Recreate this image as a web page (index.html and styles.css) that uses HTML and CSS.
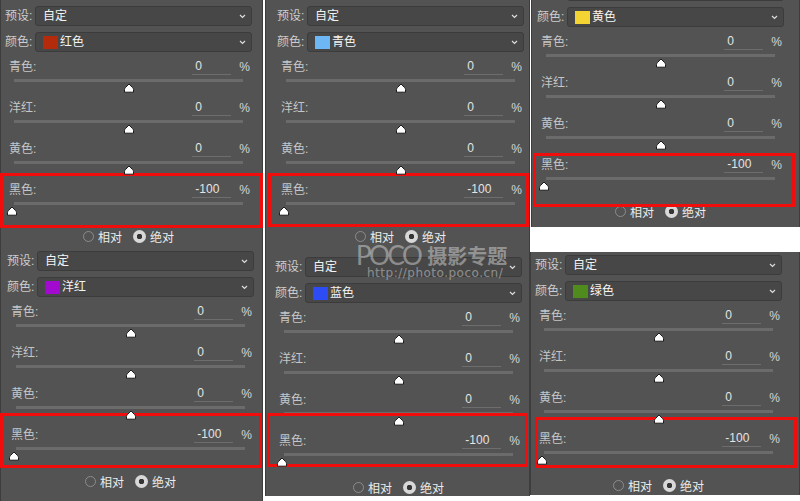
FILE: index.html
```html
<!DOCTYPE html>
<html lang="zh-CN">
<head>
    <meta charset="UTF-8">
    <meta name="viewport" content="width=device-width, initial-scale=1.0">
    <title>可选颜色 · 黑色 -100</title>
    <link rel="stylesheet" href="styles.css">
</head>
<body>
<div class="board">

    <!-- 红色 -->
    <section class="panel p1">
        <div class="field"><span class="lbl">预设:</span><div class="select"><span class="txt">自定</span><svg class="chev" width="7" height="5" viewBox="0 0 7 5"><polyline points="1,1 3.5,3.5 6,1"/></svg></div></div>
        <div class="field"><span class="lbl">颜色:</span><div class="select"><i class="swatch red"></i><span class="txt">红色</span><svg class="chev" width="7" height="5" viewBox="0 0 7 5"><polyline points="1,1 3.5,3.5 6,1"/></svg></div></div>
        <div class="adj"><div class="head"><span class="name">青色:</span><span class="val">0</span><span class="pct">%</span></div><div class="track"><svg class="thumb mid" width="12" height="10" viewBox="0 0 12 10"><path d="M1.5 9.2V6.6Q1.5 5.5 2.5 4.5L6 1l3.5 3.5q1 1 1 2.1v2.6z"/></svg></div></div>
        <div class="adj"><div class="head"><span class="name">洋红:</span><span class="val">0</span><span class="pct">%</span></div><div class="track"><svg class="thumb mid" width="12" height="10" viewBox="0 0 12 10"><path d="M1.5 9.2V6.6Q1.5 5.5 2.5 4.5L6 1l3.5 3.5q1 1 1 2.1v2.6z"/></svg></div></div>
        <div class="adj"><div class="head"><span class="name">黄色:</span><span class="val">0</span><span class="pct">%</span></div><div class="track"><svg class="thumb mid" width="12" height="10" viewBox="0 0 12 10"><path d="M1.5 9.2V6.6Q1.5 5.5 2.5 4.5L6 1l3.5 3.5q1 1 1 2.1v2.6z"/></svg></div></div>
        <div class="adj"><div class="head"><span class="name">黑色:</span><span class="val">-100</span><span class="pct">%</span></div><div class="track"><svg class="thumb min" width="12" height="10" viewBox="0 0 12 10"><path d="M1.5 9.2V6.6Q1.5 5.5 2.5 4.5L6 1l3.5 3.5q1 1 1 2.1v2.6z"/></svg></div></div>
        <div class="mode"><label class="opt"><span class="radio"></span>相对</label><label class="opt"><span class="radio on"></span>绝对</label></div>
        <div class="mark"></div>
    </section>

    <!-- 青色 -->
    <section class="panel p2">
        <div class="field"><span class="lbl">预设:</span><div class="select"><span class="txt">自定</span><svg class="chev" width="7" height="5" viewBox="0 0 7 5"><polyline points="1,1 3.5,3.5 6,1"/></svg></div></div>
        <div class="field"><span class="lbl">颜色:</span><div class="select"><i class="swatch cyan"></i><span class="txt">青色</span><svg class="chev" width="7" height="5" viewBox="0 0 7 5"><polyline points="1,1 3.5,3.5 6,1"/></svg></div></div>
        <div class="adj"><div class="head"><span class="name">青色:</span><span class="val">0</span><span class="pct">%</span></div><div class="track"><svg class="thumb mid" width="12" height="10" viewBox="0 0 12 10"><path d="M1.5 9.2V6.6Q1.5 5.5 2.5 4.5L6 1l3.5 3.5q1 1 1 2.1v2.6z"/></svg></div></div>
        <div class="adj"><div class="head"><span class="name">洋红:</span><span class="val">0</span><span class="pct">%</span></div><div class="track"><svg class="thumb mid" width="12" height="10" viewBox="0 0 12 10"><path d="M1.5 9.2V6.6Q1.5 5.5 2.5 4.5L6 1l3.5 3.5q1 1 1 2.1v2.6z"/></svg></div></div>
        <div class="adj"><div class="head"><span class="name">黄色:</span><span class="val">0</span><span class="pct">%</span></div><div class="track"><svg class="thumb mid" width="12" height="10" viewBox="0 0 12 10"><path d="M1.5 9.2V6.6Q1.5 5.5 2.5 4.5L6 1l3.5 3.5q1 1 1 2.1v2.6z"/></svg></div></div>
        <div class="adj"><div class="head"><span class="name">黑色:</span><span class="val">-100</span><span class="pct">%</span></div><div class="track"><svg class="thumb min" width="12" height="10" viewBox="0 0 12 10"><path d="M1.5 9.2V6.6Q1.5 5.5 2.5 4.5L6 1l3.5 3.5q1 1 1 2.1v2.6z"/></svg></div></div>
        <div class="mode"><label class="opt"><span class="radio"></span>相对</label><label class="opt"><span class="radio on"></span>绝对</label></div>
        <div class="mark"></div>
    </section>

    <!-- 黄色 (preset row is cropped away at the top edge) -->
    <section class="panel p3">
        <div class="field"><span class="lbl"></span><div class="select"></div></div>
        <div class="field"><span class="lbl">颜色:</span><div class="select"><i class="swatch yellow"></i><span class="txt">黄色</span><svg class="chev" width="7" height="5" viewBox="0 0 7 5"><polyline points="1,1 3.5,3.5 6,1"/></svg></div></div>
        <div class="adj"><div class="head"><span class="name">青色:</span><span class="val">0</span><span class="pct">%</span></div><div class="track"><svg class="thumb mid" width="12" height="10" viewBox="0 0 12 10"><path d="M1.5 9.2V6.6Q1.5 5.5 2.5 4.5L6 1l3.5 3.5q1 1 1 2.1v2.6z"/></svg></div></div>
        <div class="adj"><div class="head"><span class="name">洋红:</span><span class="val">0</span><span class="pct">%</span></div><div class="track"><svg class="thumb mid" width="12" height="10" viewBox="0 0 12 10"><path d="M1.5 9.2V6.6Q1.5 5.5 2.5 4.5L6 1l3.5 3.5q1 1 1 2.1v2.6z"/></svg></div></div>
        <div class="adj"><div class="head"><span class="name">黄色:</span><span class="val">0</span><span class="pct">%</span></div><div class="track"><svg class="thumb mid" width="12" height="10" viewBox="0 0 12 10"><path d="M1.5 9.2V6.6Q1.5 5.5 2.5 4.5L6 1l3.5 3.5q1 1 1 2.1v2.6z"/></svg></div></div>
        <div class="adj"><div class="head"><span class="name">黑色:</span><span class="val">-100</span><span class="pct">%</span></div><div class="track"><svg class="thumb min" width="12" height="10" viewBox="0 0 12 10"><path d="M1.5 9.2V6.6Q1.5 5.5 2.5 4.5L6 1l3.5 3.5q1 1 1 2.1v2.6z"/></svg></div></div>
        <div class="mode"><label class="opt"><span class="radio"></span>相对</label><label class="opt"><span class="radio on"></span>绝对</label></div>
        <div class="mark"></div>
    </section>

    <!-- 洋红 -->
    <section class="panel p4">
        <div class="field"><span class="lbl">预设:</span><div class="select"><span class="txt">自定</span><svg class="chev" width="7" height="5" viewBox="0 0 7 5"><polyline points="1,1 3.5,3.5 6,1"/></svg></div></div>
        <div class="field"><span class="lbl">颜色:</span><div class="select"><i class="swatch magenta"></i><span class="txt">洋红</span><svg class="chev" width="7" height="5" viewBox="0 0 7 5"><polyline points="1,1 3.5,3.5 6,1"/></svg></div></div>
        <div class="adj"><div class="head"><span class="name">青色:</span><span class="val">0</span><span class="pct">%</span></div><div class="track"><svg class="thumb mid" width="12" height="10" viewBox="0 0 12 10"><path d="M1.5 9.2V6.6Q1.5 5.5 2.5 4.5L6 1l3.5 3.5q1 1 1 2.1v2.6z"/></svg></div></div>
        <div class="adj"><div class="head"><span class="name">洋红:</span><span class="val">0</span><span class="pct">%</span></div><div class="track"><svg class="thumb mid" width="12" height="10" viewBox="0 0 12 10"><path d="M1.5 9.2V6.6Q1.5 5.5 2.5 4.5L6 1l3.5 3.5q1 1 1 2.1v2.6z"/></svg></div></div>
        <div class="adj"><div class="head"><span class="name">黄色:</span><span class="val">0</span><span class="pct">%</span></div><div class="track"><svg class="thumb mid" width="12" height="10" viewBox="0 0 12 10"><path d="M1.5 9.2V6.6Q1.5 5.5 2.5 4.5L6 1l3.5 3.5q1 1 1 2.1v2.6z"/></svg></div></div>
        <div class="adj"><div class="head"><span class="name">黑色:</span><span class="val">-100</span><span class="pct">%</span></div><div class="track"><svg class="thumb min" width="12" height="10" viewBox="0 0 12 10"><path d="M1.5 9.2V6.6Q1.5 5.5 2.5 4.5L6 1l3.5 3.5q1 1 1 2.1v2.6z"/></svg></div></div>
        <div class="mode"><label class="opt"><span class="radio"></span>相对</label><label class="opt"><span class="radio on"></span>绝对</label></div>
        <div class="mark"></div>
    </section>

    <!-- 蓝色 -->
    <section class="panel p5">
        <div class="field"><span class="lbl">预设:</span><div class="select"><span class="txt">自定</span><svg class="chev" width="7" height="5" viewBox="0 0 7 5"><polyline points="1,1 3.5,3.5 6,1"/></svg></div></div>
        <div class="field"><span class="lbl">颜色:</span><div class="select"><i class="swatch blue"></i><span class="txt">蓝色</span><svg class="chev" width="7" height="5" viewBox="0 0 7 5"><polyline points="1,1 3.5,3.5 6,1"/></svg></div></div>
        <div class="adj"><div class="head"><span class="name">青色:</span><span class="val">0</span><span class="pct">%</span></div><div class="track"><svg class="thumb mid" width="12" height="10" viewBox="0 0 12 10"><path d="M1.5 9.2V6.6Q1.5 5.5 2.5 4.5L6 1l3.5 3.5q1 1 1 2.1v2.6z"/></svg></div></div>
        <div class="adj"><div class="head"><span class="name">洋红:</span><span class="val">0</span><span class="pct">%</span></div><div class="track"><svg class="thumb mid" width="12" height="10" viewBox="0 0 12 10"><path d="M1.5 9.2V6.6Q1.5 5.5 2.5 4.5L6 1l3.5 3.5q1 1 1 2.1v2.6z"/></svg></div></div>
        <div class="adj"><div class="head"><span class="name">黄色:</span><span class="val">0</span><span class="pct">%</span></div><div class="track"><svg class="thumb mid" width="12" height="10" viewBox="0 0 12 10"><path d="M1.5 9.2V6.6Q1.5 5.5 2.5 4.5L6 1l3.5 3.5q1 1 1 2.1v2.6z"/></svg></div></div>
        <div class="adj"><div class="head"><span class="name">黑色:</span><span class="val">-100</span><span class="pct">%</span></div><div class="track"><svg class="thumb min" width="12" height="10" viewBox="0 0 12 10"><path d="M1.5 9.2V6.6Q1.5 5.5 2.5 4.5L6 1l3.5 3.5q1 1 1 2.1v2.6z"/></svg></div></div>
        <div class="mode"><label class="opt"><span class="radio"></span>相对</label><label class="opt"><span class="radio on"></span>绝对</label></div>
        <div class="mark"></div>
    </section>

    <!-- 绿色 -->
    <section class="panel p6">
        <div class="field"><span class="lbl">预设:</span><div class="select"><span class="txt">自定</span><svg class="chev" width="7" height="5" viewBox="0 0 7 5"><polyline points="1,1 3.5,3.5 6,1"/></svg></div></div>
        <div class="field"><span class="lbl">颜色:</span><div class="select"><i class="swatch green"></i><span class="txt">绿色</span><svg class="chev" width="7" height="5" viewBox="0 0 7 5"><polyline points="1,1 3.5,3.5 6,1"/></svg></div></div>
        <div class="adj"><div class="head"><span class="name">青色:</span><span class="val">0</span><span class="pct">%</span></div><div class="track"><svg class="thumb mid" width="12" height="10" viewBox="0 0 12 10"><path d="M1.5 9.2V6.6Q1.5 5.5 2.5 4.5L6 1l3.5 3.5q1 1 1 2.1v2.6z"/></svg></div></div>
        <div class="adj"><div class="head"><span class="name">洋红:</span><span class="val">0</span><span class="pct">%</span></div><div class="track"><svg class="thumb mid" width="12" height="10" viewBox="0 0 12 10"><path d="M1.5 9.2V6.6Q1.5 5.5 2.5 4.5L6 1l3.5 3.5q1 1 1 2.1v2.6z"/></svg></div></div>
        <div class="adj"><div class="head"><span class="name">黄色:</span><span class="val">0</span><span class="pct">%</span></div><div class="track"><svg class="thumb mid" width="12" height="10" viewBox="0 0 12 10"><path d="M1.5 9.2V6.6Q1.5 5.5 2.5 4.5L6 1l3.5 3.5q1 1 1 2.1v2.6z"/></svg></div></div>
        <div class="adj"><div class="head"><span class="name">黑色:</span><span class="val">-100</span><span class="pct">%</span></div><div class="track"><svg class="thumb min" width="12" height="10" viewBox="0 0 12 10"><path d="M1.5 9.2V6.6Q1.5 5.5 2.5 4.5L6 1l3.5 3.5q1 1 1 2.1v2.6z"/></svg></div></div>
        <div class="mode"><label class="opt"><span class="radio"></span>相对</label><label class="opt"><span class="radio on"></span>绝对</label></div>
        <div class="mark"></div>
    </section>

    <div class="watermark">
        <div class="wm-title"><span class="wm-poco">POCO</span><span class="wm-cn">摄影专题</span></div>
        <div class="wm-url">http://photo.poco.cn/</div>
    </div>
</div>
</body>
</html>
```

FILE: styles.css
```css
body {
    margin: 0;
    background-color: white;
    font-family: "Liberation Sans", "Noto Sans CJK SC", sans-serif;
    overflow: hidden;
}

.board {
    position: relative;
    width: 800px;
    height: 501px;
    overflow: hidden;
    background-color: white;
}

/* each screenshot sits on the board like a pasted window */
.panel {
    position: absolute;
    box-sizing: border-box;
    background-color: #535353;
    color: #c6c6c6;
    font-size: 12px;
    box-shadow: inset 1px 0 0 #3d3d3d, inset -1px 0 0 #3d3d3d;
}

.p1 { left: 0;     top: -20px; width: 263px; height: 266px; padding: 26px 0 0 0; }
.p2 { left: 265px; top: -20px; width: 265px; height: 267px; padding: 26px 0 0 7px; }
.p3 { left: 531px; top: -45px; width: 269px; height: 272px; padding: 26px 0 0 1px; }
.p4 { left: 0;     top: 246px; width: 263px; height: 260px; padding: 5px 0 0 2px; }
.p5 { left: 265px; top: 247px; width: 265px; height: 249px; padding: 10px 0 0 5px; }
.p6 { left: 530px; top: 252px; width: 270px; height: 243px; padding: 3px 0 0 0; }

.field {
    display: flex;
    align-items: center;
    height: 20px;
    line-height: 14px;
}

.field + .field {
    margin-top: 6px;
}

.lbl {
    width: 35px;
    padding-left: 5px;
    box-sizing: border-box;
    color: #cdcdcd;
    white-space: nowrap;
}

.select {
    display: flex;
    align-items: center;
    width: 217px;
    height: 20px;
    box-sizing: border-box;
    padding: 0 5px 0 7px;
    background-color: #474747;
    border: 1px solid #3c3c3c;
    border-radius: 3px;
    color: #f4f4f4;
}

.select .txt {
    flex: 1;
}

.chev {
    fill: none;
    stroke: #dcdcdc;
    stroke-width: 1.2;
}

.swatch {
    width: 15px;
    height: 13px;
    margin-right: 2px;
}

.red { background-color: #b32b0b; }
.cyan { background-color: #6db7f4; }
.yellow { background-color: #f4d433; }
.magenta { background-color: #a20bcf; }
.blue { background-color: #2e4cf6; }
.green { background-color: #4f8b1d; }

.adj {
    height: 41px;
    box-sizing: border-box;
    padding-top: 7px;
}

.head {
    display: flex;
    width: 241px;
    height: 16px;
    margin-left: 9px;
    line-height: 16px;
}

.name {
    flex: 1;
}

.val {
    width: 39px;
    box-sizing: border-box;
    padding-left: 3px;
    border-bottom: 1px solid #6d6d6d;
    color: #e4e4e4;
    line-height: 15px;
}

.pct {
    margin-left: 8px;
    color: #d6d6d6;
}

.track {
    position: relative;
    width: 229px;
    height: 3px;
    margin: 4px 0 0 14px;
    background-color: #6b6b6b;
}

.thumb {
    position: absolute;
    top: 4px;
    z-index: 1;
}

.thumb path {
    fill: white;
    stroke: #1c1c1c;
    stroke-width: 1;
    stroke-linejoin: round;
}

.thumb.mid { left: calc(50% - 6px); }
.thumb.min { left: -8px; }

.mode {
    display: flex;
    justify-content: center;
    align-items: center;
    width: 257px;
    height: 20px;
    padding-top: 10px;
    color: #ececec;
}

.opt {
    display: flex;
    align-items: center;
    gap: 4px;
}

.opt + .opt {
    margin-left: 11px;
}

.radio {
    width: 11px;
    height: 11px;
    box-sizing: border-box;
    border: 1px solid #8c8c8c;
    border-radius: 50%;
}

.radio.on {
    width: 13px;
    height: 13px;
    border: none;
    background: radial-gradient(circle, #353535 0 2.5px, #d8d8d8 3px);
}

/* red highlight frames around the 黑色 rows */
.mark {
    position: absolute;
    box-sizing: border-box;
    border: 3px solid #f20d0d;
}

.p1 .mark { left: 0;   top: 193px; width: 263px; height: 55px; }
.p2 .mark { left: 3px; top: 193px; width: 261px; height: 54px; }
.p3 .mark { left: 2px; top: 198px; width: 262px; height: 54px; }
.p4 .mark { left: 0;   top: 167px; width: 262px; height: 55px; }
.p5 .mark { left: 2px; top: 166px; width: 261px; height: 54px; }
.p6 .mark { left: 5px; top: 165px; width: 262px; height: 51px; }

.watermark {
    position: absolute;
    left: 356px;
    top: 243px;
    z-index: 2;
    color: rgba(255, 255, 255, 0.4);
}

.wm-title {
    display: flex;
    align-items: baseline;
    height: 24px;
    line-height: 24px;
}

.wm-poco {
    font-family: Lato, sans-serif;
    font-size: 26px;
    letter-spacing: -2.5px;
}

.wm-cn {
    position: relative;
    top: -1px;
    margin-left: 7px;
    font-family: "Noto Sans CJK SC", sans-serif;
    font-weight: 700;
    font-size: 20px;
}

.wm-url {
    margin-left: 11px;
    font-family: "DejaVu Sans", sans-serif;
    font-size: 12px;
    letter-spacing: 0.5px;
    line-height: 12px;
}
```
